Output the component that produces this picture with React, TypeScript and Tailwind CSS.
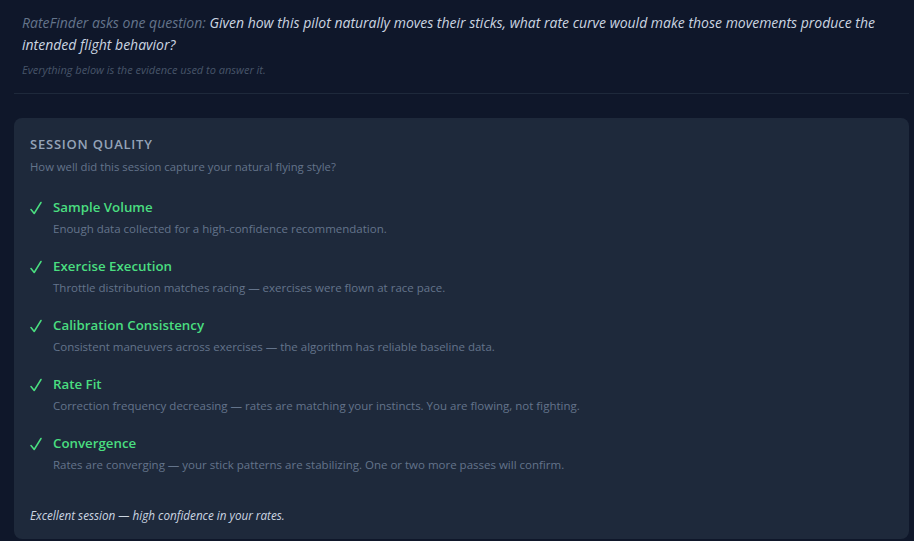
const checks = [
  {
    title: "Sample Volume",
    desc: "Enough data collected for a high-confidence recommendation.",
  },
  {
    title: "Exercise Execution",
    desc: "Throttle distribution matches racing — exercises were flown at race pace.",
  },
  {
    title: "Calibration Consistency",
    desc: "Consistent maneuvers across exercises — the algorithm has reliable baseline data.",
  },
  {
    title: "Rate Fit",
    desc: "Correction frequency decreasing — rates are matching your instincts. You are flowing, not fighting.",
  },
  {
    title: "Convergence",
    desc: "Rates are converging — your stick patterns are stabilizing. One or two more passes will confirm.",
  },
];

const Check = () => (
  <svg width="12" height="14" viewBox="0 0 12 14" className="mt-[4px] shrink-0 text-[#4ade80]">
    <polyline points="1,8.5 4.2,12.5 11,1.5" fill="none" stroke="currentColor" strokeWidth="1.5" strokeLinecap="round" strokeLinejoin="round" />
  </svg>
);

export default function App() {
  return (
    <div className="min-h-[541px] bg-[#0f172a] pl-[14px] pr-[5px] pt-[12px] font-['Open_Sans',sans-serif]">
      {/* Intro */}
      <div className="border-b border-[#1e293b] px-2 pb-[15px]">
        <p className="text-[14px] italic leading-[22px] text-[#cbd5e1]">
          <span className="text-[#64748b]">RateFinder asks one question: </span>
          Given how this pilot naturally moves their sticks, what rate curve would make those movements produce the
          intended flight behavior?
        </p>
        <p className="mt-[6px] text-[11px] italic leading-4 text-[#475569]">
          Everything below is the evidence used to answer it.
        </p>
      </div>

      {/* Session quality card */}
      <div className="mt-[24px] rounded-lg bg-[#1e293b] px-4 pb-[16px] pt-[16px]">
        <h2 className="text-[13px] font-semibold uppercase leading-5 tracking-[0.06em] text-[#94a3b8]">
          Session Quality
        </h2>
        <p className="mt-[5px] text-[11.3px] leading-4 text-[#64748b]">
          How well did this session capture your natural flying style?
        </p>

        <div className="mt-[22px] flex flex-col gap-[19px]">
          {checks.map((c) => (
            <div key={c.title} className="flex gap-[11px]">
              <Check />
              <div>
                <div className="text-[13.3px] font-semibold leading-5 text-[#4ade80]">{c.title}</div>
                <div className="mt-[3px] text-[11.5px] leading-[17px] text-[#64748b]">{c.desc}</div>
              </div>
            </div>
          ))}
        </div>

        <p className="mt-[34px] text-[11.7px] italic leading-4 text-[#cbd5e1]">
          Excellent session — high confidence in your rates.
        </p>
      </div>
    </div>
  );
}
